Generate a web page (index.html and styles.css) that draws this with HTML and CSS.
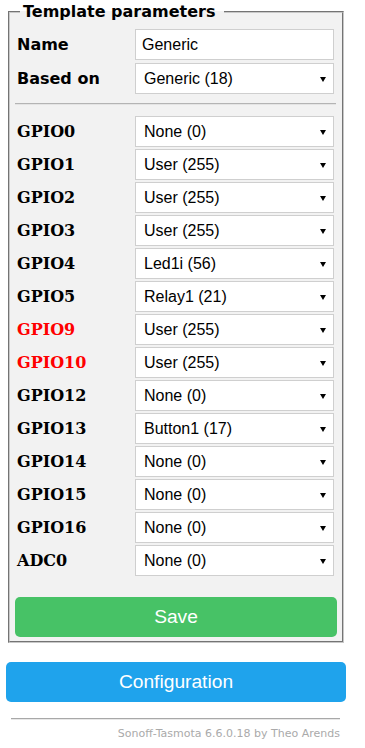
FILE: index.html
```html
<!DOCTYPE html>
<html>
<head>
<meta charset="utf-8">
<link rel="stylesheet" href="styles.css">
</head>
<body>
<div class="main">
  <fieldset class="box">
    <legend class="legend">Template parameters</legend>
    <div class="rows rows-top">
      <span class="lbl">Name</span>
      <input class="field" value="Generic">
      <span class="lbl">Based on</span>
      <div class="sel"><span class="sel-text">Generic (18)</span></div>
    </div>
    <hr class="sep">
    <div class="rows rows-gpio">
      <span class="glbl">GPIO0</span><div class="sel"><span class="sel-text">None (0)</span></div>
      <span class="glbl">GPIO1</span><div class="sel"><span class="sel-text">User (255)</span></div>
      <span class="glbl">GPIO2</span><div class="sel"><span class="sel-text">User (255)</span></div>
      <span class="glbl">GPIO3</span><div class="sel"><span class="sel-text">User (255)</span></div>
      <span class="glbl">GPIO4</span><div class="sel"><span class="sel-text">Led1i (56)</span></div>
      <span class="glbl">GPIO5</span><div class="sel"><span class="sel-text">Relay1 (21)</span></div>
      <span class="glbl red">GPIO9</span><div class="sel"><span class="sel-text">User (255)</span></div>
      <span class="glbl red">GPIO10</span><div class="sel"><span class="sel-text">User (255)</span></div>
      <span class="glbl">GPIO12</span><div class="sel"><span class="sel-text">None (0)</span></div>
      <span class="glbl">GPIO13</span><div class="sel"><span class="sel-text">Button1 (17)</span></div>
      <span class="glbl">GPIO14</span><div class="sel"><span class="sel-text">None (0)</span></div>
      <span class="glbl">GPIO15</span><div class="sel"><span class="sel-text">None (0)</span></div>
      <span class="glbl">GPIO16</span><div class="sel"><span class="sel-text">None (0)</span></div>
      <span class="glbl">ADC0</span><div class="sel"><span class="sel-text">None (0)</span></div>
    </div>
    <button class="btn btn-green">Save</button>
  </fieldset>
  <button class="btn btn-blue">Configuration</button>
  <hr class="foot-hr">
  <div class="foot">Sonoff-Tasmota 6.6.0.18 by Theo Arends</div>
</div>
</body>
</html>
```

FILE: styles.css
```css
html, body {
  margin: 0;
  padding: 0;
  background: #fff;
}

.main {
  width: 340px;
  margin-left: 6px;
  padding-top: 3px;
  font-family: "DejaVu Sans", Verdana, sans-serif;
  color: #000;
}

.box {
  margin: 0 2px;
  padding: 8px 5px 4px 5px;
  border: 2px groove #c8c8c8;
  background: #f2f2f2;
  min-width: 0;
}

.legend {
  margin-left: 5px;
  padding: 0 8px 0 3px;
  font-weight: bold;
  font-size: 16px;
  line-height: 18px;
}

.rows {
  display: grid;
  grid-template-columns: 120px 199px;
  align-items: center;
}

.rows-top {
  row-gap: 3px;
}

.rows-gpio {
  row-gap: 2px;
}

.lbl {
  padding-left: 2px;
  font-weight: bold;
  font-size: 16px;
}

.glbl {
  padding-left: 2px;
  font-family: "DejaVu Serif", Georgia, serif;
  font-weight: bold;
  font-size: 16px;
}

.red {
  color: #f00;
}

.field {
  box-sizing: border-box;
  height: 31px;
  width: 199px;
  margin: 0;
  padding: 0 6px;
  border: 1px solid #cfcfcf;
  background: #fff;
  font-family: "Liberation Sans", Arial, sans-serif;
  font-size: 16px;
  color: #000;
  outline: none;
}

.sel {
  position: relative;
  box-sizing: border-box;
  height: 31px;
  display: flex;
  align-items: center;
  padding: 0 8px;
  border: 1px solid #cfcfcf;
  background: #fff;
  font-family: "Liberation Sans", Arial, sans-serif;
  font-size: 16px;
  color: #000;
}

.sel::after {
  content: "";
  position: absolute;
  right: 7px;
  top: 50%;
  margin-top: -2px;
  border-left: 3px solid transparent;
  border-right: 3px solid transparent;
  border-top: 5px solid #000;
}

.sep {
  margin: 9px 1px 11px 0;
  border: 0;
  border-top: 1px solid #b4b4b4;
  border-bottom: 1px solid #e4e4e4;
  height: 0;
}

.btn {
  display: block;
  box-sizing: border-box;
  width: 100%;
  border: 0;
  border-radius: 5px;
  color: #fff;
  font-family: "Liberation Sans", Arial, sans-serif;
  font-size: 19.2px;
  padding: 0;
  cursor: pointer;
}

.btn-green {
  margin-top: 21px;
  height: 40px;
  background: #47c266;
}

.btn-blue {
  margin-top: 19px;
  height: 40px;
  background: #1fa3ec;
}

.foot-hr {
  margin: 16px 6px 0 5px;
  border: 0;
  border-top: 1px solid #a8a8a8;
  border-bottom: 1px solid #e8e8e8;
  height: 0;
}

.foot {
  margin: 7px 6px 0 5px;
  text-align: right;
  font-size: 11px;
  color: #aaa;
}
```
